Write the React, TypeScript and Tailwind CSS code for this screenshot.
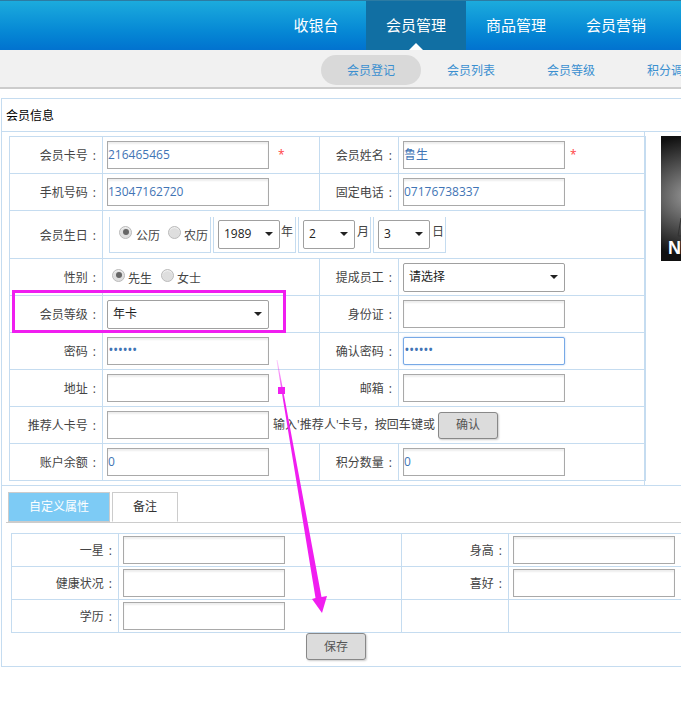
import type { ReactNode } from 'react';

const font = { fontFamily: '"Open Sans", "Noto Sans CJK SC", sans-serif' };

function Label({ children }: { children: ReactNode }) {
  return (
    <td className="border border-[#c5dcf0] pr-[6px] pt-[2px] text-right text-[12px] text-[#444]">
      {children}
      <span className="ml-[5px]">:</span>
    </td>
  );
}

function Field({ value, password, focus }: { value?: string; password?: boolean; focus?: boolean }) {
  return (
    <div
      className={
        focus
          ? 'flex h-[28px] w-[162px] items-center rounded-[2px] border border-[#78a9e6] bg-white text-[12px] text-[#3f74b5] shadow-[0_0_2px_#a9c8f0]'
          : 'flex h-[28px] w-[162px] items-center border border-[#a9a9a9] bg-white text-[12px] text-[#3f74b5] shadow-[inset_0_2px_2px_#eeeeee]'
      }
    >
      {password ? <span className="pb-[3px] pl-[1px] text-[10px] font-bold tracking-[1px]">••••••</span> : value}
    </div>
  );
}

function Select({ value, width }: { value: string; width: string }) {
  return (
    <div className={`flex h-[29px] items-center justify-between rounded-[2px] border border-[#a0a0a0] bg-white pl-[5px] pr-[6px] text-[12px] text-[#222] ${width}`}>
      <span>{value}</span>
      <span className="h-0 w-0 border-x-[4px] border-t-[4px] border-x-transparent border-t-[#222]" />
    </div>
  );
}

function Radio({ checked }: { checked?: boolean }) {
  return (
    <span className="flex h-[13px] w-[13px] items-center justify-center rounded-full border border-[#bbb] bg-[#dedede] shadow-[inset_0_1px_1px_#f4f4f4]">
      {checked && <span className="h-[6px] w-[6px] rounded-full bg-[#666]" />}
    </span>
  );
}

const cell = 'border border-[#c5dcf0] pl-[4px]';
const dateCell = 'flex h-[36px] items-start border-x border-b border-[#c5dcf0] pt-[3px]';

const topRows: { label: string; label2: string; password?: boolean; focus?: boolean }[] = [
  { label: '密码', password: true, label2: '确认密码', focus: true },
  { label: '地址', label2: '邮箱' },
];

export default function App() {
  return (
    <div className="relative h-[716px] w-[681px] overflow-hidden bg-white" style={font}>
      {/* Header */}
      <div className="flex h-[50px] justify-end border-t border-[#2c7ba3] bg-gradient-to-b from-[#1cabdd] to-[#0272cf] pr-[15px] text-[15px] text-white">
        {['收银台', '会员管理', '商品管理', '会员营销'].map((item, i) => (
          <div
            key={item}
            className={
              i === 1
                ? 'relative flex w-[100px] items-center justify-center bg-[#116fa3]'
                : 'flex w-[100px] items-center justify-center'
            }
          >
            {item}
            {i === 1 && (
              <span className="absolute bottom-0 left-[43px] h-0 w-0 border-x-[7px] border-b-[7px] border-x-transparent border-b-white" />
            )}
          </div>
        ))}
      </div>

      {/* Sub nav */}
      <div className="flex h-[39px] w-[800px] border-b-2 border-[#cccccc] bg-[#f1f1f1] pl-[321px] pt-[5px] text-[12px] text-[#3a8fd0]">
        {['会员登记', '会员列表', '会员等级', '积分调整'].map((item, i) => (
          <div
            key={item}
            className={
              i === 0
                ? 'flex h-[30px] w-[100px] items-center justify-center rounded-[15px] bg-[#d9d9d9] pt-[1px]'
                : 'flex h-[30px] w-[100px] items-center justify-center pt-[1px]'
            }
          >
            {item}
          </div>
        ))}
      </div>

      {/* Member box */}
      <div className="ml-[1px] mt-[9px] h-[569px] w-[800px] border border-[#c5dcf0] text-[12px]">
        <div className="flex h-[33px] items-center border-b border-[#c5dcf0] pl-[4px] pt-[1px] text-black">会员信息</div>
        <div className="flex h-[354px] border-b border-[#c5dcf0]">
          <div className="w-[643px] border-r border-[#c5dcf0] pl-[7px] pt-[4px]">
            <table className="w-[636px] table-fixed border-collapse">
              <colgroup>
                <col className="w-[93px]" />
                <col className="w-[217px]" />
                <col className="w-[79px]" />
                <col className="w-[247px]" />
              </colgroup>
              <tbody>
                <tr className="h-[37px]">
                  <Label>会员卡号</Label>
                  <td className={cell}>
                    <div className="flex items-center">
                      <Field value="216465465" />
                      <span className="ml-[9px] text-[#f44]">*</span>
                    </div>
                  </td>
                  <Label>会员姓名</Label>
                  <td className={cell}>
                    <div className="flex items-center">
                      <Field value="鲁生" />
                      <span className="ml-[5px] text-[#f44]">*</span>
                    </div>
                  </td>
                </tr>
                <tr className="h-[37px]">
                  <Label>手机号码</Label>
                  <td className={cell}><Field value="13047162720" /></td>
                  <Label>固定电话</Label>
                  <td className={cell}><Field value="07176738337" /></td>
                </tr>
                <tr className="h-[48px]">
                  <Label>会员生日</Label>
                  <td colSpan={3} className="border border-[#c5dcf0] pl-[6px]">
                    <div className="flex gap-[2px] text-[#444]">
                      <div className={`${dateCell} w-[102px] gap-[4px] pl-[9px] pt-[9px]`}>
                        <Radio checked />
                        <span className="mr-[4px] pt-[1px]">公历</span>
                        <Radio />
                        <span className="-ml-[1px] pt-[1px]">农历</span>
                      </div>
                      <div className={`${dateCell} w-[83px] pl-[4px]`}>
                        <Select value="1989" width="w-[62px]" />
                        <span className="pl-[1px] pt-[3px]">年</span>
                      </div>
                      <div className={`${dateCell} w-[73px] pl-[4px]`}>
                        <Select value="2" width="w-[52px]" />
                        <span className="pl-[2px] pt-[3px]">月</span>
                      </div>
                      <div className={`${dateCell} w-[73px] pl-[4px]`}>
                        <Select value="3" width="w-[52px]" />
                        <span className="pl-[2px] pt-[3px]">日</span>
                      </div>
                    </div>
                  </td>
                </tr>
                <tr className="h-[37px]">
                  <Label>性别</Label>
                  <td className="border border-[#c5dcf0] pl-[9px] pt-[2px]">
                    <div className="flex items-start text-[#444]">
                      <Radio checked />
                      <span className="ml-[3px] mr-[9px] mt-[1px]">先生</span>
                      <Radio />
                      <span className="ml-[3px] mt-[1px]">女士</span>
                    </div>
                  </td>
                  <Label>提成员工</Label>
                  <td className={cell}><Select value="请选择" width="w-[162px]" /></td>
                </tr>
                <tr className="h-[37px]">
                  <Label>会员等级</Label>
                  <td className={cell}><Select value="年卡" width="w-[162px]" /></td>
                  <Label>身份证</Label>
                  <td className={cell}><Field /></td>
                </tr>
                {topRows.map((row) => (
                  <tr key={row.label} className="h-[37px]">
                    <Label>{row.label}</Label>
                    <td className={cell}><Field password={row.password} /></td>
                    <Label>{row.label2}</Label>
                    <td className={cell}><Field password={row.focus} focus={row.focus} /></td>
                  </tr>
                ))}
                <tr className="h-[37px]">
                  <Label>推荐人卡号</Label>
                  <td colSpan={3} className={cell}>
                    <div className="flex items-center text-[#444]">
                      <Field />
                      <span className="ml-[4px] tracking-[0.05px]">输入'推荐人'卡号，按回车键或</span>
                      <button className="ml-[3px] h-[27px] w-[60px] rounded-[3px] border border-[#888] bg-[#dcdcdc] text-[12px] text-[#555] shadow-[1px_1px_2px_#ccc]">
                        确认
                      </button>
                    </div>
                  </td>
                </tr>
                <tr className="h-[37px]">
                  <Label>账户余额</Label>
                  <td className={cell}><Field value="0" /></td>
                  <Label>积分数量</Label>
                  <td className={cell}><Field value="0" /></td>
                </tr>
              </tbody>
            </table>
          </div>
          <div className="pl-[16px] pt-[4px]">
            <div className="relative h-[125px] w-[120px] overflow-hidden bg-[radial-gradient(ellipse_70px_60px_at_30px_60px,#9a9a9a,#111)]">
              <svg className="absolute left-[16px] top-[82px] h-[20px] w-[6px]" viewBox="0 0 6 20" fill="none">
                <path d="M4 0 L1 18 L5 18" stroke="#333" strokeWidth="1" />
              </svg>
              <span className="absolute bottom-[-1px] left-[7px] text-[18px] font-bold text-white" style={{ fontFamily: '"Liberation Sans", sans-serif' }}>
                N
              </span>
            </div>
          </div>
        </div>

        {/* Tabs */}
        <div className="ml-[4px] mt-[6px] flex h-[31px] gap-[2px] border-b border-[#cccccc] pl-[2px]">
          <div className="flex h-[30px] w-[102px] items-center justify-center border border-[#cccccc] bg-[#7dcbf5] text-white">自定义属性</div>
          <div className="flex h-[30px] w-[66px] items-center justify-center border border-x-[#cccccc] border-t-[#cccccc] border-b-white text-[#333]">备注</div>
        </div>

        <div className="ml-[9px] mt-[10px]">
          <table className="w-[800px] table-fixed border-collapse">
            <colgroup>
              <col className="w-[107px]" />
              <col className="w-[283px]" />
              <col className="w-[107px]" />
              <col className="w-[303px]" />
            </colgroup>
            <tbody>
              {[
                ['一星', '身高'],
                ['健康状况', '喜好'],
              ].map(([a, b]) => (
                <tr key={a} className="h-[33px]">
                  <Label>{a}</Label>
                  <td className={cell}><Field /></td>
                  <Label>{b}</Label>
                  <td className={cell}><Field /></td>
                </tr>
              ))}
              <tr className="h-[33px]">
                <Label>学历</Label>
                <td className={cell}><Field /></td>
                <td className="border border-[#c5dcf0]" />
                <td className="border border-[#c5dcf0]" />
              </tr>
            </tbody>
          </table>
        </div>
        <button className="ml-[304px] block h-[27px] w-[60px] rounded-[3px] border border-[#888] bg-[#dcdcdc] text-[12px] text-[#555] shadow-[1px_1px_2px_#ccc]">
          保存
        </button>
      </div>

      {/* Annotation overlay */}
      <div className="absolute left-[12px] top-[290px] h-[43px] w-[274px] border-[3px] border-[#f01ef0]" />
      <svg className="absolute left-0 top-0 h-[716px] w-[681px]" viewBox="0 0 681 716" fill="none">
        <defs>
          <linearGradient id="fade" x1="0" y1="360" x2="0" y2="400" gradientUnits="userSpaceOnUse">
            <stop offset="0" stopColor="#f01ef0" stopOpacity="0.2" />
            <stop offset="1" stopColor="#f01ef0" />
          </linearGradient>
        </defs>
        <polygon points="276.5,360 315.5,598 312,599 322,613 327,596 321.5,597 277.5,360" fill="url(#fade)" />
        <rect x="278" y="387" width="7" height="7" fill="#f01ef0" />
      </svg>
    </div>
  );
}
